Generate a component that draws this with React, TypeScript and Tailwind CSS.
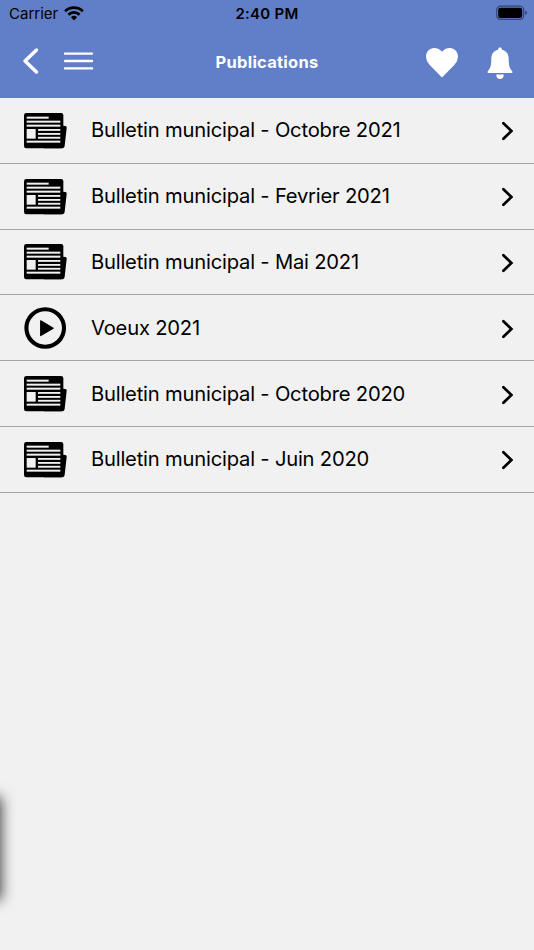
type Item = { title: string; kind: 'news' | 'video' };

const items: Item[] = [
  { title: 'Bulletin municipal - Octobre 2021', kind: 'news' },
  { title: 'Bulletin municipal - Fevrier 2021', kind: 'news' },
  { title: 'Bulletin municipal - Mai 2021', kind: 'news' },
  { title: 'Voeux 2021', kind: 'video' },
  { title: 'Bulletin municipal - Octobre 2020', kind: 'news' },
  { title: 'Bulletin municipal - Juin 2020', kind: 'news' },
];

function NewsIcon() {
  return (
    <svg viewBox="0 0 132 108" className="mt-px h-9 w-11">
      <path d="M114 38 L125 39 Q129 40 128 45 L122 98 Q121 106 112 106 L60 106 Z" fill="#000" />
      <rect x="0" y="0" width="118" height="106" rx="7" fill="#000" />
      <g fill="#f1f1f1">
        <rect x="8" y="11" width="66" height="6" />
        <rect x="8" y="23" width="101" height="6" />
        <rect x="8" y="35" width="101" height="6" />
        <rect x="8" y="48" width="27" height="29" />
        <rect x="42" y="48" width="67" height="5.5" />
        <rect x="42" y="60" width="67" height="5.5" />
        <rect x="42" y="71.5" width="67" height="5.5" />
        <rect x="8" y="83" width="101" height="6" />
      </g>
    </svg>
  );
}

function PlayIcon() {
  return (
    <svg viewBox="0 0 44 44" className="h-11 w-11">
      <circle cx="21.2" cy="22" r="18.8" fill="none" stroke="#000" strokeWidth="4.1" />
      <path d="M16.7 14.8 L29.2 22.2 L16.7 29.6 Z" fill="#000" stroke="#000" strokeWidth="1.2" strokeLinejoin="round" />
    </svg>
  );
}

function Row({ item }: { item: Item }) {
  return (
    <li className="flex h-[65.8px] items-center border-b border-[#a4a4a4] pl-6 pr-5">
      {item.kind === 'news' ? <NewsIcon /> : <PlayIcon />}
      <span className="ml-[23px] flex-1 whitespace-nowrap text-[20.2px] leading-6 tracking-[-0.2px]">{item.title}</span>
      <svg viewBox="0 0 13 20" className="mt-0.5 h-5 w-[13px]">
        <path d="M2.4 2.2 L10.4 10 L2.4 17.8" fill="none" stroke="#000" strokeWidth="2.7" strokeLinecap="round" />
      </svg>
    </li>
  );
}

function StatusBar() {
  return (
    <div className="grid h-7 grid-cols-3 items-center">
      <div className="flex items-center pl-[9px] text-[15px] leading-5">
        <span>Carrier</span>
        <svg viewBox="0 0 20 15" className="-mt-px ml-1.5 h-[15px] w-5">
          <g fill="none" stroke="#000" strokeWidth="2.7">
            <path d="M1.1 5.3 A12.5 12.5 0 0 1 18.9 5.3" />
            <path d="M4.4 8.7 A8 8 0 0 1 15.6 8.7" />
          </g>
          <path d="M6.9 11.2 A4.5 4.5 0 0 1 13.1 11.2 L10 14.4 Z" fill="#000" />
        </svg>
      </div>
      <span className="text-center text-[15px] font-semibold leading-5 tracking-[0.25px]">2:40 PM</span>
      <svg viewBox="0 0 32 16" className="-mt-0.5 mr-1.5 h-4 w-8 justify-self-end">
        <rect x="0.7" y="1.2" width="27" height="13.2" rx="3.8" fill="none" stroke="#34466f" strokeWidth="1.2" />
        <rect x="2.2" y="2.7" width="24" height="10.2" rx="2.2" fill="#000" />
        <path d="M29.2 5.6 Q31 6.3 31 7.8 Q31 9.3 29.2 10 Z" fill="#34466f" />
      </svg>
    </div>
  );
}

function NavBar() {
  return (
    <div className="grid flex-1 grid-cols-3 items-center pb-1 text-white">
      <div className="flex items-center pl-[22px]">
        <svg viewBox="0 0 18 28" className="h-7 w-[18px]">
          <path d="M14.5 3 L3 14 L14.5 25" fill="none" stroke="#fff" strokeWidth="3.5" strokeLinecap="round" strokeLinejoin="round" />
        </svg>
        <svg viewBox="0 0 30 20" className="ml-6 h-5 w-[30px]">
          <path d="M1 2.6 H28 M1 10 H28 M1 17.4 H28" stroke="#fff" strokeWidth="2.4" strokeLinecap="round" />
        </svg>
      </div>
      <h1 className="mt-0.5 text-center text-[16.5px] font-bold leading-5 tracking-[0.25px]">Publications</h1>
      <div className="mt-[3px] flex items-center justify-end pr-[21px]">
        <svg viewBox="0 0 32 32" className="h-8 w-8">
          <path d="M16 30.6 L3.5 17.8 Q0 14 0 9.8 C0 4.5 3.7 1 8.2 1 Q13.2 1 16 4.8 Q18.8 1 23.8 1 C28.3 1 32 4.5 32 9.8 Q32 14 28.5 17.8 Z" fill="#fff" />
        </svg>
        <svg viewBox="0 0 26 32" className="ml-[29px] h-8 w-[26px]">
          <path d="M13 0.3 Q14.8 0.5 15 2.8 C19.5 3.8 21.7 7.5 21.7 12 C21.7 19 22.8 21.3 25.2 24.2 Q26 26 24.3 26 H1.7 Q0 26 0.8 24.2 C3.2 21.3 4.3 19 4.3 12 C4.3 7.5 6.5 3.8 11 2.8 Q11.2 0.5 13 0.3 Z M9.2 27.5 H16.8 Q16.5 32 13 32 Q9.5 32 9.2 27.5 Z" fill="#fff" />
        </svg>
      </div>
    </div>
  );
}

export default function App() {
  return (
    <div className="relative flex h-[950px] w-[534px] flex-col overflow-hidden bg-[#f1f1f1] font-['Inter',sans-serif] text-black">
      <header className="flex h-[98px] flex-col bg-[#617fc8]">
        <StatusBar />
        <NavBar />
      </header>
      <ul className="flex flex-col">
        {items.map((item) => (
          <Row key={item.title} item={item} />
        ))}
      </ul>
      <div className="absolute -left-5 top-[798px] h-[101px] w-5 shadow-[0_0_14px_1px_rgba(0,0,0,0.75)]" />
    </div>
  );
}
